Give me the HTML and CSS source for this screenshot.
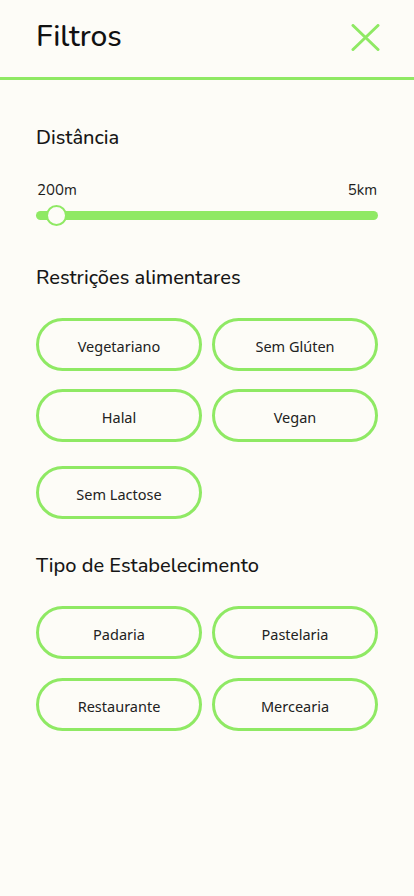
FILE: index.html
```html
<!DOCTYPE html>
<html lang="pt">
<head>
<meta charset="utf-8">
<title>Filtros</title>
<link rel="stylesheet" href="styles.css">
</head>
<body>
<header class="header">
  <h1 class="title">Filtros</h1>
  <button class="close" aria-label="Fechar">
    <svg width="29" height="27" viewBox="0 0 29 27"><path d="M2 1.5 L27 25.5 M27 1.5 L2 25.5" stroke="#8fe964" stroke-width="3" stroke-linecap="round" fill="none"/></svg>
  </button>
</header>
<main class="content">
  <section class="distance">
    <h2 class="section-title">Distância</h2>
    <div class="range-labels"><span>200m</span><span>5km</span></div>
    <div class="slider">
      <div class="track"></div>
      <div class="thumb"></div>
    </div>
  </section>
  <section class="group">
    <h2 class="section-title">Restrições alimentares</h2>
    <div class="chips">
      <button class="chip">Vegetariano</button>
      <button class="chip">Sem Glúten</button>
      <button class="chip">Halal</button>
      <button class="chip">Vegan</button>
      <button class="chip chip-gap">Sem Lactose</button>
    </div>
  </section>
  <section class="group group-type">
    <h2 class="section-title">Tipo de Estabelecimento</h2>
    <div class="chips">
      <button class="chip">Padaria</button>
      <button class="chip">Pastelaria</button>
      <button class="chip">Restaurante</button>
      <button class="chip">Mercearia</button>
    </div>
  </section>
</main>
</body>
</html>
```
FILE: styles.css
```css
* { box-sizing: border-box; }
html, body { margin: 0; padding: 0; }
body {
  background: #fdfcf7;
  font-family: "Nunito", Lato, "Noto Sans", sans-serif;
  color: #141414;
  width: 414px;
  height: 896px;
}
.header {
  height: 80px;
  border-bottom: 3px solid #8fe964;
  display: flex;
  align-items: center;
  justify-content: space-between;
  padding: 0 34px 3px 36px;
}
.title {
  margin: 0;
  font-size: 30px;
  font-weight: 500;
  line-height: 36px;
  color: #111;
}
.close {
  border: 0;
  background: none;
  padding: 0;
  display: flex;
  margin-top: 1px;
}
.content {
  padding: 0 36px 0 36px;
}
.section-title {
  margin: 0;
  font-size: 20px;
  font-weight: 500;
  line-height: 24px;
  color: #161616;
  padding-left: 0;
}
.distance { padding-top: 46px; }
.range-labels {
  margin-top: 31px;
  display: flex;
  justify-content: space-between;
  font-size: 15px;
  font-weight: 400;
  line-height: 18px;
  color: #1c1c1c;
  padding: 0 1px 0 1px;
}
.slider {
  position: relative;
  margin-top: 6px;
  height: 21px;
  display: flex;
  align-items: center;
}
.track {
  width: 100%;
  height: 9px;
  border-radius: 5px;
  background: #8fe964;
}
.thumb {
  position: absolute;
  left: 10px;
  top: 0;
  width: 21px;
  height: 21px;
  border-radius: 50%;
  background: #fdfcf7;
  border: 2px solid #8fe964;
}
.group { padding-top: 40px; }
.group-type { padding-top: 35px; }
.chips {
  margin-top: 28px;
  display: grid;
  grid-template-columns: 166px 166px;
  column-gap: 10px;
  row-gap: 18px;
}
.group-type .chips { row-gap: 19px; }
.chip {
  height: 53px;
  border: 3px solid #8fe964;
  border-radius: 27px;
  background: transparent;
  font-family: "Noto Sans", "Open Sans", sans-serif;
  font-size: 14.5px;
  font-weight: 400;
  color: #222;
  padding: 2px 0 0 0;
}
.chip-gap { margin-top: 6px; }
```
